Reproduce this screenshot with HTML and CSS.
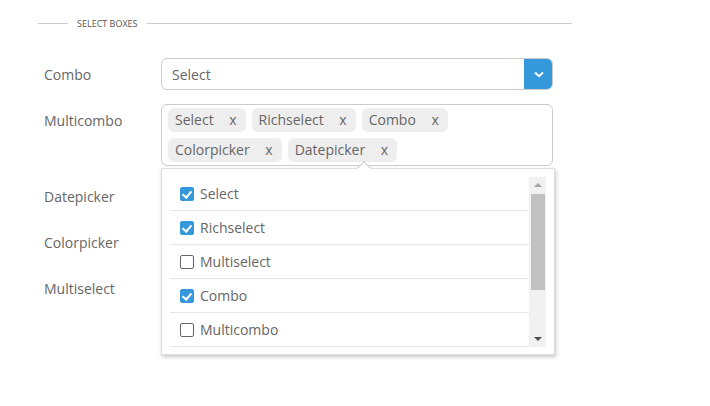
FILE: index.html
```html
<!DOCTYPE html>
<html lang="en">
<head>
    <meta charset="UTF-8">
    <title>Select boxes</title>
    <link rel="stylesheet" href="styles.css">
</head>
<body>
    <div class="page">
        <div class="fieldset">
            <span class="line short"></span>
            <span class="legend">SELECT BOXES</span>
            <span class="line"></span>
        </div>

        <div class="form">
            <div class="row">
                <label class="label">Combo</label>
                <div class="combo">
                    <span class="combo-value">Select</span>
                    <span class="combo-btn">
                        <svg width="10" height="7" viewBox="0 0 10 7"><path d="M1 1.5 L5 5.2 L9 1.5" fill="none" stroke="#fff" stroke-width="2"/></svg>
                    </span>
                </div>
            </div>

            <div class="row">
                <label class="label">Multicombo</label>
                <div class="multicombo">
                    <span class="tag">Select <i>x</i></span>
                    <span class="tag">Richselect <i>x</i></span>
                    <span class="tag">Combo <i>x</i></span>
                    <span class="tag">Colorpicker <i>x</i></span>
                    <span class="tag">Datepicker <i>x</i></span>
                </div>
            </div>

            <div class="row">
                <label class="label">Datepicker</label>
                <div class="input"></div>
            </div>
            <div class="row">
                <label class="label">Colorpicker</label>
                <div class="input"></div>
            </div>
            <div class="row">
                <label class="label">Multiselect</label>
                <div class="input"></div>
            </div>
        </div>

        <!-- popup of the multicombo -->
        <div class="popup">
            <span class="pointer"></span>
            <div class="list-wrap">
                <ul class="list">
                    <li class="checked"><span class="check"></span>Select</li>
                    <li class="checked"><span class="check"></span>Richselect</li>
                    <li><span class="check"></span>Multiselect</li>
                    <li class="checked"><span class="check"></span>Combo</li>
                    <li><span class="check"></span>Multicombo</li>
                </ul>
                <div class="scrollbar">
                    <span class="arrow up"></span>
                    <span class="thumb"></span>
                    <span class="arrow down"></span>
                </div>
            </div>
        </div>
    </div>
</body>
</html>
```

FILE: styles.css
```css
* {
    margin: 0;
    padding: 0;
    box-sizing: border-box;
}

body {
    font-family: "Open Sans", "Noto Sans", sans-serif;
    font-size: 14px;
    color: #666;
    background: #fff;
}

.page {
    position: relative;
    width: 710px;
    height: 406px;
    padding: 18px 0 0 38px;
}

.fieldset {
    display: flex;
    align-items: center;
    width: 534px;
    height: 10px;
}

.fieldset .line {
    flex: 1;
    height: 1px;
    background: #ccc;
}

.fieldset .line.short {
    flex: 0 0 30px;
}

.legend {
    font-size: 9px;
    padding: 0 9px;
    color: #555;
}

.form {
    margin: 30px 0 0 6px;
    display: flex;
    flex-direction: column;
    gap: 14px;
}

.row {
    display: flex;
    align-items: flex-start;
}

.label {
    width: 117px;
    height: 32px;
    line-height: 34px;
    color: #666;
}

.combo, .input {
    width: 392px;
    height: 32px;
    border: 1px solid #ccc;
    border-radius: 6px;
    display: flex;
    align-items: center;
    overflow: hidden;
}

.combo-value {
    flex: 1;
    padding-left: 10px;
}

.combo-btn {
    width: 29px;
    height: 32px;
    margin: -1px -1px -1px 0;
    background: #3498db;
    display: flex;
    align-items: center;
    justify-content: center;
}

.multicombo {
    width: 392px;
    border: 1px solid #ccc;
    border-radius: 6px;
    padding: 3px 6px 3px;
    display: flex;
    flex-wrap: wrap;
    gap: 6px;
}

.tag {
    height: 24px;
    line-height: 24px;
    background: #eee;
    border-radius: 6px;
    padding: 0 9px 0 7px;
}

.tag i {
    font-style: normal;
    margin-left: 12px;
}

.popup {
    position: absolute;
    left: 161px;
    top: 168px;
    width: 394px;
    height: 187px;
    background: #fff;
    border: 1px solid #ddd;
    box-shadow: 1px 2px 4px rgba(0, 0, 0, 0.22);
    padding: 8px;
}

.pointer {
    position: absolute;
    left: 197px;
    top: -6px;
    width: 10px;
    height: 10px;
    background: #fff;
    border-left: 1px solid #ccc;
    border-top: 1px solid #ccc;
    transform: rotate(45deg);
}

.list-wrap {
    display: flex;
    height: 170px;
}

.list {
    flex: 1;
    list-style: none;
}

.list li {
    height: 34px;
    border-bottom: 1px solid #e6e6e6;
    display: flex;
    align-items: center;
    padding-left: 10px;
}

.check {
    width: 14px;
    height: 14px;
    margin-right: 6px;
    border: 1.5px solid #666;
    border-radius: 2px;
    position: relative;
}

.checked .check {
    background: #3498db;
    border-color: #3498db;
}

.checked .check::after {
    content: "";
    position: absolute;
    left: 3px;
    top: 1px;
    width: 4px;
    height: 7px;
    border: solid #fff;
    border-width: 0 2px 2px 0;
    transform: rotate(40deg);
}

.scrollbar {
    width: 17px;
    background: #f1f1f1;
    display: flex;
    flex-direction: column;
    align-items: center;
}

.thumb {
    width: 14px;
    height: 96px;
    background: #c1c1c1;
}

.arrow {
    width: 0;
    height: 0;
    border-left: 4px solid transparent;
    border-right: 4px solid transparent;
}

.arrow.up {
    border-bottom: 4px solid #a3a3a3;
    margin: 6px 0 7px;
}

.arrow.down {
    border-top: 4px solid #505050;
    margin: auto 0 6px;
}
```
